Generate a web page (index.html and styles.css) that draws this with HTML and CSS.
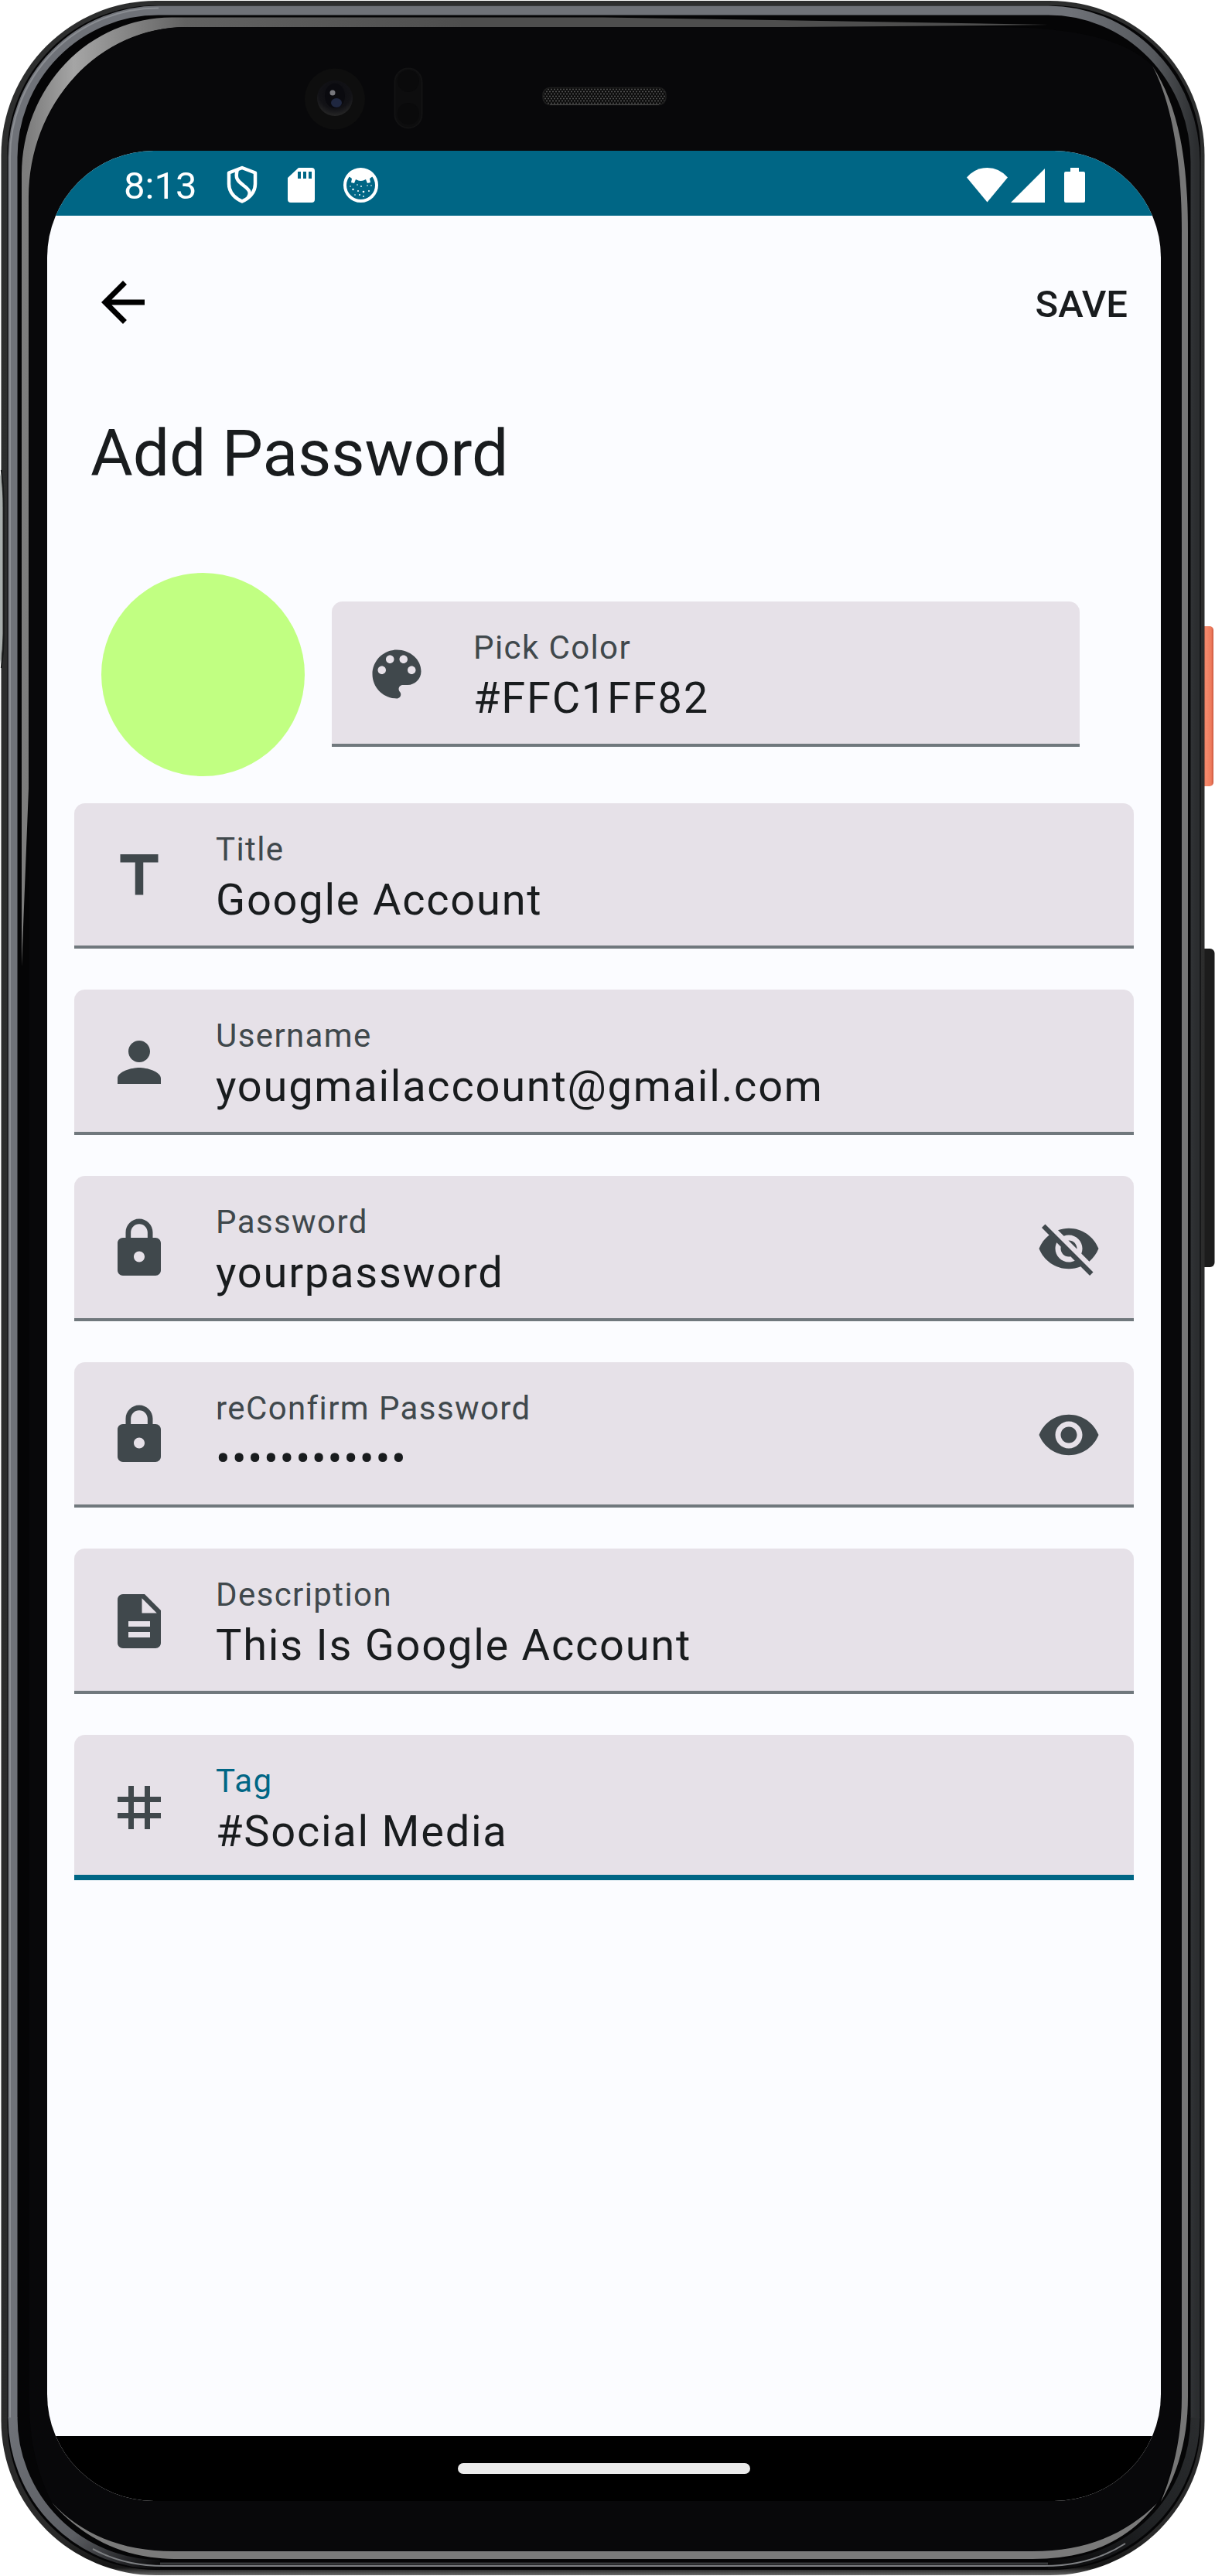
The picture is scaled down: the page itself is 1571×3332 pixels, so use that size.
FILE: index.html
```html
<!DOCTYPE html>
<html lang="en">
<head>
<meta charset="utf-8">
<title>Add Password</title>
<link rel="stylesheet" href="styles.css">
</head>
<body>
<div class="device">
  <svg class="frame" viewBox="0 0 1571 3332" aria-hidden="true">
    <defs>
      <linearGradient id="rim" x1="0" y1="0" x2="0" y2="1">
        <stop offset="0" stop-color="#2d2e2e"/><stop offset=".985" stop-color="#2a2a2a"/><stop offset=".997" stop-color="#151515"/><stop offset="1" stop-color="#6a6a6a"/>
      </linearGradient>
      <linearGradient id="metal" gradientUnits="userSpaceOnUse" x1="0" y1="0" x2="1571" y2="0">
        <stop offset="0" stop-color="#6f7278"/><stop offset=".88" stop-color="#6f7278"/><stop offset=".95" stop-color="#55585c"/><stop offset=".985" stop-color="#2b2d2f"/>
      </linearGradient>
      <linearGradient id="metal-foot" gradientUnits="userSpaceOnUse" x1="16" y1="3130" x2="207" y2="3317">
        <stop offset="0" stop-color="#6f7278"/><stop offset=".6" stop-color="#5c5e63"/><stop offset="1" stop-color="#0a0a0b"/>
      </linearGradient>
      <linearGradient id="dark-foot" gradientUnits="userSpaceOnUse" x1="1545" y1="3130" x2="1355" y2="3317">
        <stop offset="0" stop-color="#2a2c2e"/><stop offset=".5" stop-color="#202224"/><stop offset="1" stop-color="#0a0a0b"/>
      </linearGradient>
      <linearGradient id="edge" gradientUnits="userSpaceOnUse" x1="0" y1="0" x2="600" y2="0">
        <stop offset="0" stop-color="#777"/><stop offset=".06" stop-color="#7d7d7d"/><stop offset=".16" stop-color="#a5a5a5"/><stop offset=".4" stop-color="#626262"/><stop offset="1" stop-color="#4e4e4e"/>
      </linearGradient>
      <linearGradient id="power" x1="0" y1="0" x2="1" y2="0">
        <stop offset="0" stop-color="#d8583f"/><stop offset=".5" stop-color="#f58a6c"/><stop offset=".85" stop-color="#ee7a5c"/><stop offset="1" stop-color="#c9553c"/>
      </linearGradient>
      <radialGradient id="lens" cx=".5" cy=".35" r=".65">
        <stop offset="0" stop-color="#0b0b10"/><stop offset=".7" stop-color="#121216"/><stop offset="1" stop-color="#262626"/>
      </radialGradient>
      <pattern id="mesh" width="4" height="6" patternUnits="userSpaceOnUse">
        <rect width="4" height="6" fill="#0c0c0c"/><circle cx="1" cy="1.5" r="1" fill="#555"/><circle cx="3" cy="4.5" r="1" fill="#555"/>
      </pattern>
    </defs>
    <rect x="1550" y="810" width="19" height="207" rx="5" fill="url(#power)"/>
    <rect x="1550" y="1227" width="20.500" height="412" rx="6" fill="#1c1c1c"/>
    <rect x="1.500" y="1" width="1556" height="3330" rx="200" fill="url(#rim)"/>
    <path d="M0 612Q3.500 625 3.500 660V820Q3.500 840 0 860Z" fill="#a9afad"/>
    <path d="M1.500 608Q5 625 5 660V820Q5 845 1.500 864" fill="none" stroke="#181a1a" stroke-width="1.500"/>
    <rect x="9.500" y="7" width="1543" height="3317" rx="192" fill="#050506"/>
    <path d="M1545.500 3128V210A190 196 0 0 0 1355 13.500H205A188 190 0 0 0 16.500 205V3128" fill="none" stroke="url(#metal)" stroke-width="12"/>
    <path d="M16.500 3127A190 190 0 0 0 207 3317" fill="none" stroke="url(#metal-foot)" stroke-width="12"/>
    <path d="M1545.500 3127A190 190 0 0 1 1355 3317" fill="none" stroke="url(#dark-foot)" stroke-width="12"/>
    <path d="M205 10.500A191 193 0 0 0 13 205V3127" fill="none" stroke="#8b8e93" stroke-width="2"/>
    <path d="M120 3297Q160 3319 212 3319H1350Q1410 3319 1455 3290" fill="none" stroke="#7d7f82" stroke-width="2"/>
    <path d="M207 3316H1355" stroke="#37393b" stroke-width="3"/>
    <path d="M1355 32L1000 26L780 22.500H222A194 203 0 0 0 28 225V1250L37 1020V255A203 220 0 0 1 240 35H1000Q1200 34 1355 32Z" fill="url(#edge)"/>
    <path d="M1490 85C1516 135 1528 210 1528 300V3100C1528 3150 1518 3195 1498 3236C1455 3278 1405 3300 1335 3300H225C155 3300 105 3277 67 3237Q38 3180 38 3110V255A203 220 0 0 1 240 35H1290Q1440 35 1490 85Z" fill="#08080a"/>
    <path d="M1490 85C1522 135 1536 200 1536 300V3100C1536 3150 1525 3195 1501 3236C1518 3195 1528 3150 1528 3100V300C1528 210 1516 135 1490 85Z" fill="#767676"/>
    <path d="M67 3237C100 3275 150 3309 225 3310H1335C1410 3310 1460 3285 1496 3238C1455 3278 1405 3300 1335 3300H225C155 3300 105 3277 67 3237Z" fill="#7a7a7a"/>
    <ellipse cx="433" cy="128" rx="39" ry="39.500" fill="#0e0e0e"/>
    <circle cx="433" cy="127" r="23" fill="url(#lens)"/>
    <ellipse cx="433" cy="124" rx="13" ry="16" fill="#0a0a0f"/>
    <ellipse cx="435" cy="133" rx="7" ry="6" fill="#1f2740"/>
    <circle cx="430" cy="120" r="3.500" fill="#77777d"/>
    <rect x="510.500" y="88.500" width="35" height="77" rx="17.500" fill="#0d0d0e" stroke="#121213" stroke-width="2"/>
    <circle cx="528" cy="105" r="14" fill="#0a0a0b"/><circle cx="528" cy="147" r="14" fill="#0a0a0b"/>
    <rect x="702" y="113.500" width="159" height="22" rx="9" fill="url(#mesh)" stroke="#1d1d1d" stroke-width="1.500"/>
    <path d="M711 135.500H852" stroke="#4a4a4a" stroke-width="1"/>
  </svg>

  <main class="screen">
    <div class="status-bar">
      <span class="clock">8:13</span>
      <div class="status-left">
        <svg width="40" height="50" viewBox="0 0 40 50" fill="none" stroke="#fff" stroke-width="4.500" stroke-linejoin="round"><path d="M20 3L37 9.500V24C37 35 29 42.500 20 46.500C11 42.500 3 35 3 24V9.500Z"/><path d="M14 5C10 18 16 21 22 26C29 31 32 35 28 41"/></svg>
        <svg class="sd" width="35" height="45" viewBox="0 0 35 45"><path fill="#fff" fill-rule="evenodd" d="M14 0H31Q35 0 35 4V41Q35 45 31 45H4Q0 45 0 41V13ZM13 5V14H17V5ZM20 5V14H24V5ZM27 5V14H31V5Z"/></svg>
        <svg width="45" height="45" viewBox="0 0 45 45"><circle cx="22.500" cy="22.500" r="20.500" fill="none" stroke="#fff" stroke-width="4"/><path fill="#fff" d="M7 11Q14 1 22.500 1T38 11L34 14L35 19L31 20L29 15Q22.500 19 16 15L14 20L10 19L11 14Z"/><g fill="#fff"><circle cx="12.500" cy="28" r="1.200"/><circle cx="18" cy="22" r=".8"/><circle cx="23" cy="24" r=".9"/><circle cx="26" cy="31" r="1.300"/><circle cx="19" cy="30" r="1"/><circle cx="31" cy="23" r=".8"/><circle cx="33" cy="30" r="1"/><circle cx="15" cy="35" r=".8"/><circle cx="21" cy="35" r="1"/><circle cx="26" cy="37" r=".9"/><circle cx="36" cy="23" r=".8"/><circle cx="9" cy="24" r=".8"/></g></svg>
      </div>
      <div class="status-right">
        <svg width="53" height="45" viewBox="0 0 53 45"><path fill="#fff" d="M26.500 44.500L0 12.500Q11 0 26.500 0T53 12.500Z"/></svg>
        <svg class="signal" width="44" height="45" viewBox="0 0 44 45"><path fill="#fff" d="M44 1V45H0Z"/></svg>
        <svg width="27" height="45" viewBox="0 0 27 45"><path fill="#fff" d="M8 0H19V5H25Q27 5 27 7V43Q27 45 25 45H2Q0 45 0 43V7Q0 5 2 5H8Z"/></svg>
      </div>
    </div>

    <header class="app-bar">
      <svg class="icon back" viewBox="0 0 24 24"><path d="M20 11H7.830l5.590-5.590L12 4l-8 8 8 8 1.410-1.410L7.830 13H20v-2z"/></svg>
      <span class="save">SAVE</span>
    </header>

    <h1 class="heading">Add Password</h1>

    <div class="color-row">
      <div class="swatch"></div>
      <div class="field color-field">
        <svg class="icon" viewBox="0 0 24 24"><path d="M12 3c-4.970 0-9 4.030-9 9s4.030 9 9 9c.83 0 1.500-.67 1.500-1.500 0-.39-.15-.74-.39-1.010-.23-.26-.38-.61-.38-.99 0-.83.67-1.500 1.500-1.500H16c2.760 0 5-2.240 5-5 0-4.420-4.030-8-9-8zm-5.500 9c-.83 0-1.500-.67-1.500-1.500S5.670 9 6.500 9 8 9.670 8 10.500 7.330 12 6.500 12zm3-4C8.670 8 8 7.330 8 6.500S8.670 5 9.500 5s1.500.67 1.500 1.500S10.330 8 9.500 8zm5 0c-.83 0-1.500-.67-1.500-1.500S13.670 5 14.500 5s1.500.67 1.500 1.500S15.330 8 14.500 8zm3 4c-.83 0-1.500-.67-1.500-1.500S16.670 9 17.500 9s1.500.67 1.500 1.500-.67 1.500-1.500 1.500z"/></svg>
        <div class="text"><span class="label">Pick Color</span><span class="value">#FFC1FF82</span></div>
      </div>
    </div>

    <div class="fields">
      <div class="field">
        <svg class="icon" viewBox="0 0 24 24"><path d="M5 4v3h5.500v12h3V7H19V4z"/></svg>
        <div class="text"><span class="label">Title</span><span class="value">Google Account</span></div>
      </div>
      <div class="field">
        <svg class="icon" viewBox="0 0 24 24"><path d="M12 12c2.210 0 4-1.790 4-4s-1.790-4-4-4-4 1.790-4 4 1.790 4 4 4zm0 2c-2.670 0-8 1.340-8 4v2h16v-2c0-2.660-5.330-4-8-4z"/></svg>
        <div class="text"><span class="label">Username</span><span class="value">yougmailaccount@gmail.com</span></div>
      </div>
      <div class="field">
        <svg class="icon" viewBox="0 0 24 24"><path d="M18 8h-1V6c0-2.760-2.240-5-5-5S7 3.240 7 6v2H6c-1.100 0-2 .9-2 2v10c0 1.100.9 2 2 2h12c1.100 0 2-.9 2-2V10c0-1.100-.9-2-2-2zm-6 9c-1.100 0-2-.9-2-2s.9-2 2-2 2 .9 2 2-.9 2-2 2zm3.100-9H8.900V6c0-1.710 1.390-3.100 3.100-3.100 1.710 0 3.100 1.390 3.100 3.100v2z"/></svg>
        <div class="text"><span class="label">Password</span><span class="value">yourpassword</span></div>
        <svg class="icon" viewBox="0 0 24 24"><path d="M12 7c2.760 0 5 2.240 5 5 0 .65-.13 1.260-.36 1.830l2.920 2.920c1.510-1.260 2.700-2.890 3.430-4.750-1.730-4.390-6-7.500-11-7.500-1.400 0-2.740.25-3.980.7l2.160 2.160C10.740 7.130 11.350 7 12 7zM2 4.270l2.280 2.280.46.46C3.080 8.300 1.780 10.020 1 12c1.730 4.390 6 7.500 11 7.500 1.550 0 3.030-.3 4.380-.84l.42.42L19.730 22 21 20.730 3.270 3 2 4.270zM7.530 9.800l1.550 1.550c-.05.21-.08.43-.08.65 0 1.660 1.340 3 3 3 .22 0 .44-.03.65-.08l1.550 1.550c-.67.33-1.410.53-2.200.53-2.760 0-5-2.240-5-5 0-.79.2-1.530.53-2.200zm4.310-.78l3.150 3.150.02-.16c0-1.660-1.340-3-3-3l-.17.01z"/></svg>
      </div>
      <div class="field">
        <svg class="icon" viewBox="0 0 24 24"><path d="M18 8h-1V6c0-2.760-2.240-5-5-5S7 3.240 7 6v2H6c-1.100 0-2 .9-2 2v10c0 1.100.9 2 2 2h12c1.100 0 2-.9 2-2V10c0-1.100-.9-2-2-2zm-6 9c-1.100 0-2-.9-2-2s.9-2 2-2 2 .9 2 2-.9 2-2 2zm3.100-9H8.900V6c0-1.710 1.390-3.100 3.100-3.100 1.710 0 3.100 1.390 3.100 3.100v2z"/></svg>
        <div class="text"><span class="label">reConfirm Password</span><span class="value">••••••••••••</span></div>
        <svg class="icon" viewBox="0 0 24 24"><path d="M12 4.500C7 4.500 2.730 7.610 1 12c1.730 4.390 6 7.500 11 7.500s9.270-3.110 11-7.500c-1.730-4.390-6-7.500-11-7.500zM12 17c-2.760 0-5-2.240-5-5s2.240-5 5-5 5 2.240 5 5-2.240 5-5 5zm0-8c-1.660 0-3 1.340-3 3s1.340 3 3 3 3-1.340 3-3-1.340-3-3-3z"/></svg>
      </div>
      <div class="field">
        <svg class="icon" viewBox="0 0 24 24"><path d="M14 2H6c-1.100 0-1.990.9-1.990 2L4 20c0 1.100.89 2 1.990 2H18c1.100 0 2-.9 2-2V8l-6-6zm2 16H8v-2h8v2zm0-4H8v-2h8v2zm-3-5V3.500L18.500 9H13z"/></svg>
        <div class="text"><span class="label">Description</span><span class="value">This Is Google Account</span></div>
      </div>
      <div class="field focused">
        <svg class="icon" viewBox="0 0 24 24"><path d="M20 10V8h-4V4h-2v4h-4V4H8v4H4v2h4v4H4v2h4v4h2v-4h4v4h2v-4h4v-2h-4v-4h4zm-6 4h-4v-4h4v4z"/></svg>
        <div class="text"><span class="label">Tag</span><span class="value">#Social Media</span></div>
      </div>
    </div>

    <div class="nav-bar"><div class="home-pill"></div></div>
  </main>
</div>
</body>
</html>
```
FILE: styles.css
```css
* { box-sizing: border-box; }
body { margin: 0; background: #fff; font-family: Roboto, sans-serif; }
svg { display: block; flex: none; }

.device {
  position: relative;
  width: 1571px;
  height: 3332px;
  padding: 195px 70px 97px 61px;
  overflow: hidden;
}
.frame { position: absolute; inset: 0; width: 1571px; height: 3332px; }

.screen {
  position: relative;
  display: flex;
  flex-direction: column;
  height: 3040px;
  background: #fbfcff;
  border-radius: 138px;
  overflow: hidden;
  color: #191c1e;
}

.status-bar {
  display: flex;
  align-items: center;
  height: 84px;
  padding: 4px 98px 0 99px;
  background: #006685;
  color: #fff;
}
.clock { width: 133px; padding-top: 4px; font-size: 49px; line-height: 56px; }
.status-left, .status-right { display: flex; align-items: center; }
.status-left { gap: 37px; }
.sd { margin-left: 2px; }
.status-right { margin-left: auto; gap: 4px; }
.signal { margin-right: 21px; }

.app-bar {
  display: flex;
  align-items: center;
  justify-content: space-between;
  height: 224px;
  padding: 0 43px 0 56px;
}
.icon { width: 84px; height: 84px; fill: #40484c; }
.back { fill: #000; }
.save { padding-top: 5px; font-size: 49px; line-height: 70px; font-weight: 500; }

.heading {
  margin: 28px 56px 0;
  font-size: 84px;
  line-height: 112px;
  font-weight: 400;
  letter-spacing: -.1px;
}

.color-row {
  display: flex;
  align-items: flex-start;
  gap: 35px;
  margin: 98px 105px 35px 70px;
}
.swatch { width: 263px; height: 263px; border-radius: 50%; background: #c1ff82; }
.color-field { flex: 1; margin-top: 37px; }

.fields { display: flex; flex-direction: column; gap: 53px; padding: 0 35px; }
.field {
  display: flex;
  align-items: center;
  gap: 56px;
  height: 188px;
  padding: 0 42px;
  background: #e6e1e8;
  border-radius: 14px 14px 0 0;
  box-shadow: inset 0 -4px #70787d;
}
.text { flex: 1; display: flex; flex-direction: column; align-self: flex-start; padding: 32px 0 0 1px; }
.label { font-size: 42px; line-height: 56px; letter-spacing: 1.4px; color: #40484c; }
.value { font-size: 56px; line-height: 74px; letter-spacing: 1.75px; white-space: nowrap; }
.focused { box-shadow: inset 0 -7px #006685; }
.focused .label { color: #006685; }

.nav-bar {
  display: flex;
  align-items: center;
  justify-content: center;
  height: 84px;
  margin-top: auto;
  background: #000;
}
.home-pill { width: 378px; height: 14px; border-radius: 7px; background: #ebebeb; }
```
